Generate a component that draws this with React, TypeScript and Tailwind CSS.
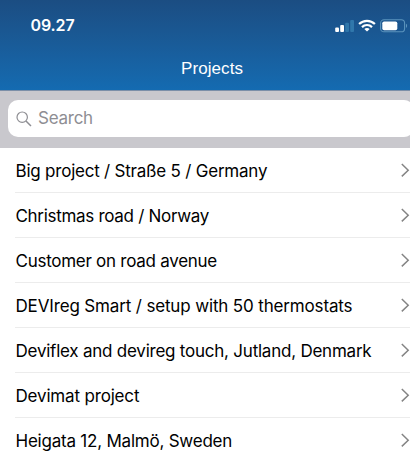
import React from 'react';

const projects = [
  { name: 'Big project / Straße 5 / Germany', tracking: 'tracking-[-0.22px]' },
  { name: 'Christmas road / Norway', tracking: 'tracking-[-0.3px]' },
  { name: 'Customer on road avenue', tracking: 'tracking-[-0.27px]' },
  { name: 'DEVIreg Smart / setup with 50 thermostats', tracking: 'tracking-[-0.15px]' },
  { name: 'Deviflex and devireg touch, Jutland, Denmark', tracking: 'tracking-[-0.23px]' },
  { name: 'Devimat project', tracking: 'tracking-[-0.17px]' },
  { name: 'Heigata 12, Malmö, Sweden', tracking: 'tracking-[-0.22px]' }
];

const SignalIcon: React.FC = () => (
  <svg width="20" height="14" viewBox="0 0 20 14" fill="#fff">
    <rect x="0.2" y="8.5" width="3.8" height="4.5" rx="1" />
    <rect x="5.2" y="6" width="3.8" height="7" rx="1" />
    <rect x="10.2" y="3.8" width="3.8" height="9.2" rx="1" fill="#3077ab" />
    <rect x="15.2" y="1" width="3.8" height="12" rx="1" fill="#3077ab" />
  </svg>
);

const WifiIcon: React.FC = () => (
  <svg width="18" height="13" viewBox="0 0 18 13" fill="none" stroke="#fff" strokeWidth="2.2">
    <path d="M1.1 5C5.5 0.7 12.5 0.7 16.9 5" />
    <path d="M4 8.1C6.8 5.3 11.2 5.3 14 8.1" />
    <path d="M9 12.6L6.3 10C7.8 8.6 10.2 8.6 11.7 10Z" fill="#fff" stroke="none" />
  </svg>
);

const BatteryIcon: React.FC = () => (
  <svg width="28" height="14" viewBox="0 0 28 14">
    <rect x="0.6" y="0.8" width="24" height="12" rx="3.4" fill="none" stroke="#5b94bd" strokeWidth="1.1" />
    <rect x="2.3" y="2.4" width="15" height="8.8" rx="1.8" fill="#fff" />
    <path d="M26 4.7C27.5 5.4 27.5 8.2 26 8.9Z" fill="#5b94bd" />
  </svg>
);

const Header: React.FC = () => (
  <header className="h-[91px] bg-linear-to-b from-[#1b4d82] to-[#146bb1] border-b border-[#7c8fa8] text-white">
    <div className="h-[51px] flex items-center justify-between pl-[30.5px] pr-[2px]">
      <span className="pb-px text-[16px] font-semibold tracking-[-0.12px]">09.27</span>
      <div className="flex items-center">
        <SignalIcon />
        <span className="ml-[3px]"><WifiIcon /></span>
        <span className="ml-[4px]"><BatteryIcon /></span>
      </div>
    </div>
    <h1 className="h-[35px] pl-[14px] flex items-center justify-center text-[17px] tracking-[0.08px] font-['Liberation_Sans',sans-serif]">
      Projects
    </h1>
  </header>
);

const SearchBar: React.FC = () => (
  <div className="h-[57px] bg-[#c9c8cd] pl-[8px] pt-[9px] overflow-hidden">
    <div className="w-[406px] h-[37px] rounded-[10px] bg-white flex items-center pl-[8px]">
      <svg width="16" height="16" viewBox="0 0 16 16" fill="none" stroke="#8e8e93" strokeWidth="1.2">
        <circle cx="6.2" cy="6.2" r="5.2" />
        <path d="M10 10L15 15" strokeWidth="1.5" />
      </svg>
      <span className="ml-[6px] text-[17px] tracking-[-0.25px] text-[#8e8e93]">Search</span>
    </div>
  </div>
);

const App: React.FC = () => {
  return (
    <div className="w-[410px] h-[460px] overflow-hidden bg-white font-['Inter',sans-serif]">
      <Header />
      <SearchBar />
      <ul className="pl-[15px]">
        {projects.map((project) => (
          <li key={project.name} className="h-[45px] flex items-center justify-between border-b border-[#ececec]">
            <span className={`pl-[0.5px] pt-[3px] text-[17px] whitespace-nowrap text-black ${project.tracking}`}>
              {project.name}
            </span>
            <svg className="shrink-0" width="10" height="16" viewBox="0 0 10 16" fill="none" stroke="#858585" strokeWidth="1.5">
              <path d="M1.8 2L8.2 8.2L1.8 14.4" />
            </svg>
          </li>
        ))}
      </ul>
    </div>
  );
};

export default App;
